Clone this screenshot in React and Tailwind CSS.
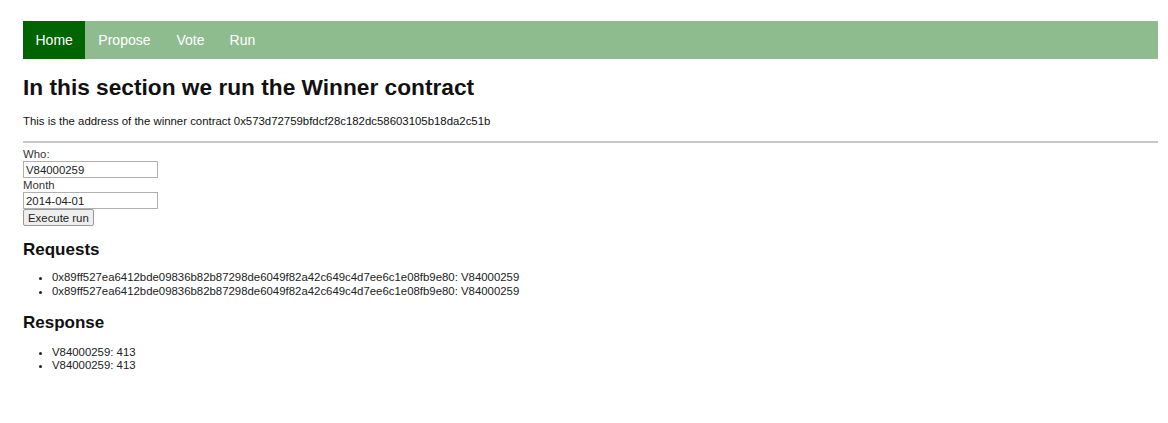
export default function App() {
  const requests = [
    "0x89ff527ea6412bde09836b82b87298de6049f82a42c649c4d7ee6c1e08fb9e80: V84000259",
    "0x89ff527ea6412bde09836b82b87298de6049f82a42c649c4d7ee6c1e08fb9e80: V84000259",
  ];
  const responses = ["V84000259: 413", "V84000259: 413"];

  return (
    <div
      className="min-h-[423px] bg-white pl-[23px] pr-[10px] pt-[21px] text-[#111]"
      style={{ fontFamily: '"Liberation Sans", Arial, sans-serif' }}
    >
      <nav className="flex h-[38px] items-stretch bg-[#8fbc8f] text-[14px] text-white">
        <a className="flex items-center bg-[#006400] px-[12.5px]">Home</a>
        <a className="flex items-center px-[13px]">Propose</a>
        <a className="flex items-center px-[13px]">Vote</a>
        <a className="flex items-center px-[12px]">Run</a>
      </nav>

      <h1 className="mt-[17px] text-[22.7px] font-bold leading-[23px]">
        In this section we run the Winner contract
      </h1>
      <p className="mt-[15px] text-[11.4px] leading-[14px]">
        This is the address of the winner contract 0x573d72759bfdcf28c182dc58603105b18da2c51b
      </p>
      <hr className="mt-[13px] border-t-2 border-[#c8c8c8]" />

      <div className="mt-[4px] flex flex-col items-start text-[11.4px] leading-[14px] text-[#333]">
        <label>Who:</label>
        <input
          defaultValue="V84000259"
          className="h-[17px] w-[135px] border border-[#b0b0b0] px-[2px] text-[11.4px] text-[#222]"
        />
        <label>Month</label>
        <input
          defaultValue="2014-04-01"
          className="h-[17px] w-[135px] border border-[#b0b0b0] px-[2px] text-[11.4px] text-[#222]"
        />
        <button className="h-[17px] rounded-[2px] border border-[#999] bg-[#eeeeee] px-[4px] text-[11.4px] leading-[14px] text-[#222]">
          Execute run
        </button>
      </div>

      <h3 className="mt-[15px] text-[17px] font-bold leading-[18px]">Requests</h3>
      <ul className="mt-[11px] list-disc pl-[29px] text-[11.4px] leading-[14px] text-[#222]">
        {requests.map((r, i) => (
          <li key={i}>{r}</li>
        ))}
      </ul>

      <h3 className="mt-[16px] text-[17px] font-bold leading-[18px]">Response</h3>
      <ul className="mt-[14px] list-disc pl-[29px] text-[11.4px] leading-[13px] text-[#222]">
        {responses.map((r, i) => (
          <li key={i}>{r}</li>
        ))}
      </ul>
    </div>
  );
}
